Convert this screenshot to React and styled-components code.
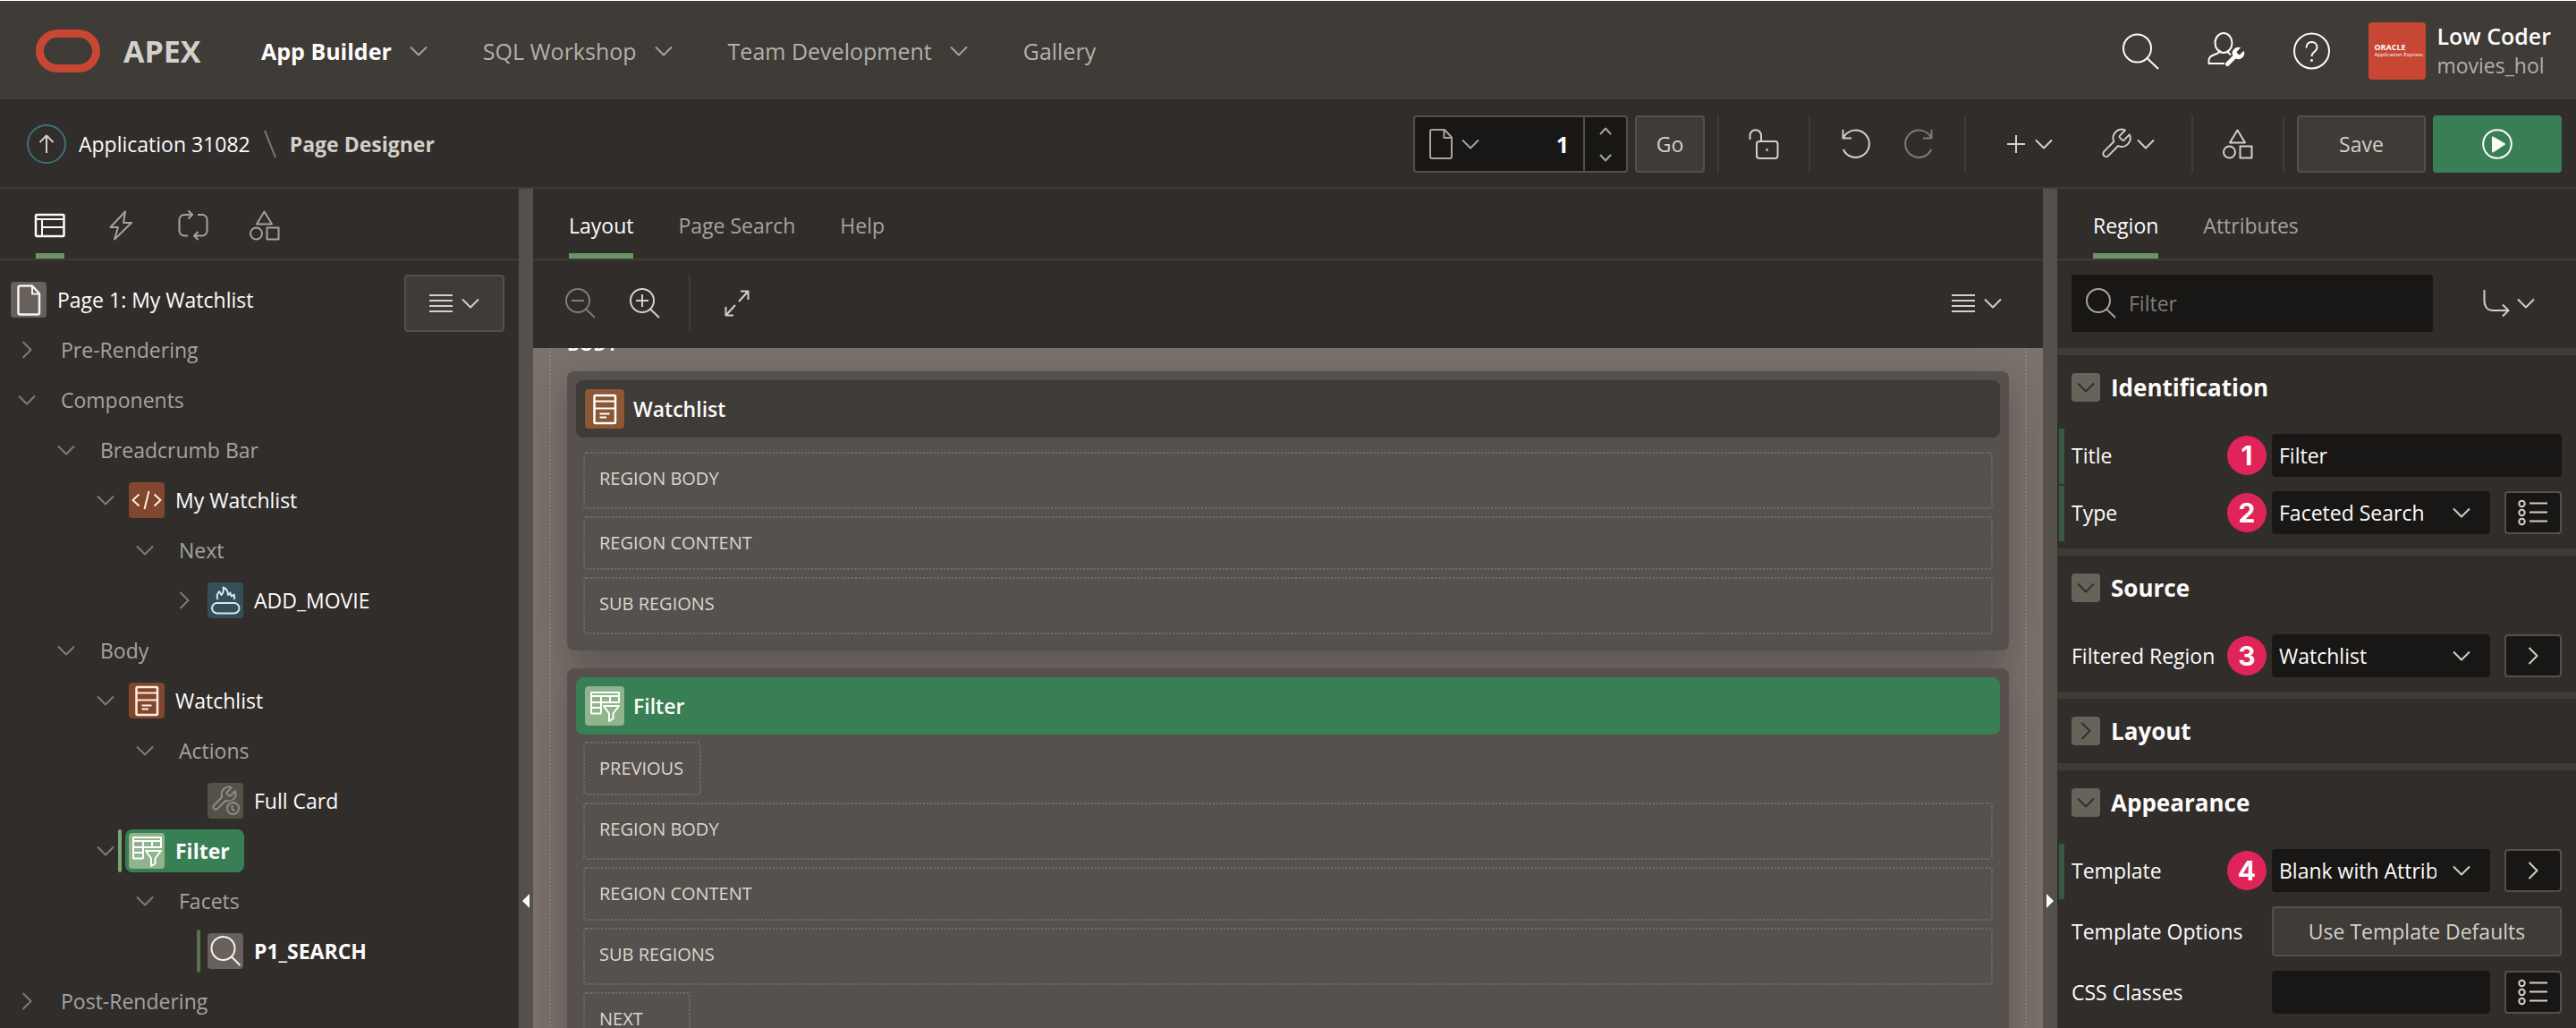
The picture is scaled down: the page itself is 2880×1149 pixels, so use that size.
import React from 'react';
import styled, { createGlobalStyle, css } from 'styled-components';

const c = {
  base: '#312d2a',
  raised: '#3f3b36',
  edge: '#54504a',
  field: '#191715',
  canvas: '#7b726d',
  card: '#56514c',
  green: '#397f55',
  underline: '#6b9464',
  white: '#fdfcfb',
  muted: '#a6a39f',
  soft: '#d3d0cb',
  pink: '#df2459',
};

const Global = createGlobalStyle`
  *, *::before, *::after { box-sizing: border-box; }
  body { margin: 0; background: ${c.base}; color: ${c.white}; font: 23px/32px "Open Sans", "Noto Sans", sans-serif; }
  button, input, select { font: inherit; color: inherit; margin: 0; }
  button { cursor: pointer; }
  a { color: inherit; text-decoration: none; }
  ul { list-style: none; margin: 0; padding: 0; }
`;

/* ---------- icons ---------- */

const WRENCH = 'M14.7 6.3a1 1 0 0 0 0 1.4l1.6 1.6a1 1 0 0 0 1.4 0l3.77-3.77a6 6 0 0 1-7.94 7.94l-6.91 6.91a2.12 2.12 0 0 1-3-3l6.91-6.91a6 6 0 0 1 7.94-7.94l-3.76 3.76z';

const ICONS = {
  down: [20, 12, <path d="M1 1.5l9 9 9-9" />],
  up: [14, 9, <path d="M1 8l6-6.5L13 8" />],
  downSmall: [14, 9, <path d="M1 1l6 6.5L13 1" />],
  right: [12, 20, <path d="M1.5 1l9 9-9 9" />],
  search: [41, 41, <><circle cx="16.5" cy="17" r="15.5" /><path d="M28 28.5L40 40" /></>],
  searchSmall: [34, 34, <><circle cx="14" cy="14" r="13" /><path d="M23.5 24l9.5 9" /></>],
  zoomOut: [34, 34, <><circle cx="14" cy="14" r="13" /><path d="M23.5 24l9.5 9M7 14h14" /></>],
  zoomIn: [34, 34, <><circle cx="14" cy="14" r="13" /><path d="M23.5 24l9.5 9M7 14h14M14 7v14" /></>],
  admin: [42, 42, <><ellipse cx="18" cy="12" rx="9.5" ry="11" /><path d="M19 35H1.5v-3c0-3 1.5-5 4.5-6.2l5-2c2-1 3-2 2.5-4M23 20v2.5l3 3" /><g transform="translate(16.5 14.5) scale(1.12)"><path d={WRENCH} fill="currentColor" stroke="none" /></g></>],
  help: [42, 42, <><circle cx="20.5" cy="21" r="19.5" /><path d="M14.5 17.5c0-4 2.5-6.5 6-6.5s6 2.5 6 6c0 5-6 4.5-6 10" /><circle cx="20.5" cy="31.5" r="1.5" fill="currentColor" stroke="none" /></>],
  arrowUp: [20, 22, <path d="M10 21V2M2.5 9L10 1.5 17.5 9" />],
  doc: [26, 34, <><path d="M3 1h14l8 8.500V31a2 2 0 0 1-2 2H3a2 2 0 0 1-2-2V3a2 2 0 0 1 2-2z" /><path d="M16.5 1.5V10H25" /></>],
  lock: [34, 34, <><path d="M1.5 12V7.5a6.2 6.2 0 0 1 12.500 0v6" /><rect x="9" y="14" width="23.5" height="19" rx="3" /><path d="M20.5 22v3" /></>],
  undo: [32, 34, <path d="M1.5 1v9.500H11M2 10A15.2 15.2 0 1 1 1.8 23" />],
  redo: [32, 34, <path d="M30.5 1v9.500H21M30 10A15.2 15.2 0 1 0 30.2 23" />],
  plus: [22, 22, <path d="M11 1v20M1 11h20" />],
  wrench: [34, 34, <g transform="translate(-2.5 -2.5) scale(1.6)"><path d={WRENCH} strokeWidth="1.2" /></g>],
  shapes: [34, 34, <><path d="M16.5 1.5L25 15.500H8z" /><circle cx="7.5" cy="26" r="6.5" /><rect x="19.5" y="19.5" width="13" height="13" /></>],
  play: [34, 34, <><circle cx="17" cy="17" r="15.8" /><path d="M12 9.5L25 17 12 25.500z" fill="currentColor" /></>],
  layout: [34, 26, <><rect x="1" y="1" width="31.5" height="24" rx="1" strokeWidth="2.5" /><path d="M1 6h31M8 6v19M8 15h24" /></>],
  bolt: [34, 34, <path d="M21 1.5L4.5 19H13L9 32.5 28 14h-9z" />],
  sync: [34, 34, <><path d="M11 28.500H7a5.5 5.5 0 0 1-5.5-5.5V10.5A5.5 5.5 0 0 1 7 5h9M11.5 0.5L16 5l-4.5 4.5" /><path d="M22 5h5a5.5 5.5 0 0 1 5.5 5.500V23a5.5 5.5 0 0 1-5.5 5.500h-9M22.5 24L18 28.5l4.5 4.5" /></>],
  lines: [26, 22, <path d="M0 2h26M0 8h26M0 14h26M0 20h26" />],
  expand: [28, 30, <path d="M16 13L26.5 1.5M18 1.5h8.500V11M12 17L1.5 28.5M10 28.500H1.5V19" />],
  goto: [30, 32, <path d="M1.5 1v12c0 7 4 11 10 11h17M22 17.5l6.5 6.5-6.5 6.5" />],
  bullets: [34, 30, <><circle cx="4.5" cy="5" r="3.2" /><circle cx="4.5" cy="15" r="3.2" /><circle cx="4.5" cy="25" r="3.2" /><path d="M13 4.5h20M13 14.5h20M13 24.5h20" /></>],
  page: [40, 40, <><path d="M10.5 4.500H24l8 8.500v21.5a2 2 0 0 1-2 2H10.5a2 2 0 0 1-2-2v-28a2 2 0 0 1 2-2z" strokeWidth="2.5" /><path d="M24 5v8.500h8" /></>],
  code: [40, 40, <path d="M11.5 13.5l-7 6.500 7 6.500M28.5 13.5l7 6.500-7 6.500M17.5 30l5-20" />],
  cards: [40, 40, <><rect x="8.5" y="5" width="23.5" height="31" rx="1" strokeWidth="2.5" /><path d="M8.5 11.500H32M8.5 19.500H32M14.5 25.5h11M14.5 29.5h7.5" /></>],
  fire: [40, 40, <><rect x="5" y="23" width="30.5" height="11.5" rx="5.7" /><path d="M11.5 19c-1.5-3-.5-6.500 1.500-9l2.500 4c2-2 3-4.500 2-8.500 4 1.500 5.500 4.500 5.500 8.500l2.500-2.500c0 2 .5 3 1.500 4l2.500-2c1 2 1 3.500 0 5.500" /></>],
  wrenchClock: [40, 40, <><g transform="translate(2.5 2) scale(1.32)"><path d={WRENCH} strokeWidth="1.5" /></g><circle cx="28.5" cy="28.5" r="9" fill="#54504a" stroke="none" /><circle cx="28.5" cy="28.5" r="6.5" /><path d="M27.5 25v4l2.5 2.5" /></>],
  facet: [40, 40, <><path d="M16 28.500H5V5h31v11H5M5 9h31M5 22h11M16 9v19.5M26 9v7" /><path d="M19 20h17l-6.5 8.5v6l-4.5 2.5v-8.500z" /></>],
  find: [40, 40, <><circle cx="17.5" cy="17" r="13" /><path d="M27 26.5l9.5 9.5" /></>],
  slash: [14, 32, <path d="M1 1l12 30" />],
  collapseLeft: [8, 16, <path d="M8 0v16L0 8z" fill="currentColor" stroke="none" />],
  collapseRight: [8, 16, <path d="M0 0v16l8-8z" fill="currentColor" stroke="none" />],
};

const Svg = styled.svg`
  display: block;
  flex: none;
  overflow: visible;
`;

function Icon({ name }) {
  const [w, h, body] = ICONS[name];
  return (
    <Svg width={w} height={h} viewBox={`0 0 ${w} ${h}`} fill="none" stroke="currentColor" strokeWidth="2" strokeLinejoin="round" aria-hidden="true">
      {body}
    </Svg>
  );
}

/* ---------- frame ---------- */

const Page = styled.div`
  height: 100vh;
  display: flex;
  flex-direction: column;
  overflow: hidden;
  border-top: 1px solid #fff;
`;

const Header = styled.header`
  flex: none;
  height: 110px;
  padding: 2px 28px 0 40px;
  display: flex;
  align-items: center;
  background: ${c.raised};
`;

const LogoMark = styled.span`
  flex: none;
  width: 72px;
  height: 48px;
  border: 9px solid #c74634;
  border-radius: 24px;
`;

const LogoText = styled.span`
  width: 92px;
  margin-left: 26px;
  font-size: 34px;
  line-height: 48px;
  font-weight: 700;
  color: ${c.soft};
`;

const Nav = styled.nav`
  flex: 1;
  margin-left: 62px;
  display: flex;
  gap: 62px;
`;

const NavLink = styled.a`
  display: flex;
  align-items: center;
  gap: 20px;
  font-size: 25px;
  font-weight: ${(p) => (p.$current ? 700 : 400)};
  color: ${(p) => (p.$current ? c.white : '#b3b0ac')};
  svg { color: ${c.muted}; }
`;

const HeaderTools = styled.div`
  display: flex;
  gap: 54px;
  margin-right: 42px;
`;

const BareButton = styled.button`
  display: flex;
  align-items: center;
  justify-content: center;
  gap: ${(p) => p.$gap || 10}px;
  padding: 0;
  border: 0;
  background: none;
  color: ${(p) => (p.$dim ? '#7f7b76' : c.soft)};
`;

const HeaderButton = styled(BareButton)`
  width: 42px;
  height: 42px;
  color: ${c.white};
`;

const Avatar = styled.span`
  width: 64px;
  height: 64px;
  padding-left: 6px;
  display: flex;
  flex-direction: column;
  justify-content: center;
  border-radius: 4px;
  background: #c74634;
  font-size: 6px;
  line-height: 8px;
  white-space: nowrap;
  strong { font-size: 9px; }
`;

const User = styled.div`
  display: flex;
  align-items: center;
  gap: 12px;
`;

const UserName = styled.div`
  font-size: 25px;
  line-height: 33px;
  font-weight: 600;
  small { display: block; font-size: 23px; font-weight: 400; color: #b3b0ac; }
`;

const Toolbar = styled.div`
  flex: none;
  height: 100px;
  padding: 2px 16px 0 30px;
  display: flex;
  align-items: center;
  border-bottom: 2px solid ${c.raised};
`;

const Crumbs = styled.nav`
  flex: 1;
  display: flex;
  align-items: center;
  strong { font-weight: 700; color: ${c.soft}; }
  > svg { margin: 0 15px; color: #7f7b76; }
`;

const UpLink = styled.a`
  width: 44px;
  height: 44px;
  margin-right: 14px;
  display: grid;
  place-items: center;
  border: 2px solid #3e6f7b;
  border-radius: 50%;
  color: ${c.soft};
`;

const PagePicker = styled.div`
  width: 240px;
  height: 64px;
  margin-right: 8px;
  display: flex;
  border: 2px solid ${c.edge};
  border-radius: 4px;
  background: ${c.field};
`;

const PickerButton = styled(BareButton)`
  width: 88px;
  color: ${c.muted};
`;

const PickerInput = styled.input`
  width: 100px;
  padding: 0 16px;
  border: 0;
  background: none;
  text-align: right;
  font-size: 25px;
  font-weight: 700;
`;

const Stepper = styled.div`
  flex: 1;
  display: flex;
  flex-direction: column;
  border-left: 2px solid ${c.edge};
`;

const StepButton = styled(BareButton)`
  flex: 1;
  color: ${c.muted};
`;

const Button = styled.button`
  width: ${(p) => (p.$wide ? '144px' : '78px')};
  height: 64px;
  display: grid;
  place-items: center;
  padding: 0;
  border: 2px solid ${(p) => (p.$hot ? c.green : c.edge)};
  border-radius: 4px;
  background: ${(p) => (p.$hot ? c.green : c.raised)};
  color: ${(p) => (p.$hot ? c.white : c.soft)};
`;

const MenuButton = styled(Button)`
  width: 112px;
  display: flex;
  align-items: center;
  justify-content: center;
  gap: 10px;
`;

const Group = styled.div`
  height: 64px;
  margin-left: ${(p) => (p.$first ? 14 : 0)}px;
  padding: 0 16px;
  display: flex;
  border-left: 2px solid ${c.raised};
`;

const ToolButton = styled(BareButton)`
  width: ${(p) => p.$w}px;
`;

const Actions = styled.div`
  padding-left: 14px;
  display: flex;
  gap: 8px;
  border-left: 2px solid ${c.raised};
`;

const Columns = styled.main`
  flex: 1;
  min-height: 0;
  display: grid;
  grid-template-columns: 580px 16px minmax(0, 1fr) 16px 580px;
`;

const Panel = styled.section`
  min-height: 0;
  overflow: hidden;
  display: flex;
  flex-direction: column;
`;

const Splitter = styled.div`
  display: grid;
  grid-template-rows: 6fr 1fr;
  justify-items: center;
  align-items: end;
  background: ${c.edge};
`;

const Tabs = styled.div`
  flex: none;
  height: 80px;
  padding: 0 40px;
  display: flex;
  gap: ${(p) => p.$gap || 50}px;
  border-bottom: 2px solid ${c.raised};
`;

const Tab = styled.button`
  height: 78px;
  padding: 10px 0 0;
  display: flex;
  align-items: center;
  justify-content: center;
  border: 0;
  border-bottom: 6px solid ${(p) => (p.$on ? c.underline : 'transparent')};
  background: none;
  color: ${(p) => (p.$on ? c.white : c.muted)};
`;

const IconTab = styled(Tab)`
  width: 32px;
`;

/* ---------- tree ---------- */

const Tree = styled.ul`
  padding-top: 16px;
`;

const TreeRow = styled.li`
  height: 56px;
  padding-left: ${(p) => 8 + p.$level * 44}px;
  padding-right: 16px;
  display: flex;
  align-items: center;
`;

const Twisty = styled.button`
  width: 44px;
  height: 44px;
  display: grid;
  place-items: center;
  padding: 0;
  border: 0;
  background: none;
  color: #7f7b76;
`;

const Marker = styled.span`
  width: 4px;
  height: 48px;
  margin: 0 4px 0 -8px;
  border-radius: 2px;
  background: ${(p) => (p.$bright ? '#7ba56f' : '#58734f')};
`;

const Node = styled.span`
  height: 48px;
  padding: ${(p) => (p.$plain ? '0 16px' : '0 16px 0 4px')};
  display: flex;
  align-items: center;
  gap: 12px;
  border-radius: 8px;
  color: ${(p) => (p.$plain ? c.muted : c.white)};
  font-weight: ${(p) => (p.$bold ? 700 : p.$plain ? 400 : 500)};
  ${(p) => p.$selected && css`background: ${c.green};`}
`;

const RootRow = styled(TreeRow)`
  justify-content: space-between;
  align-items: flex-start;
  ${Node} { height: 56px; font-weight: 400; }
`;

const tones = {
  rust: ['#80462e', '#fdeedd'],
  clay: ['#8b5735', '#ffffff'],
  teal: ['#364f57', '#d3e9f2'],
  dull: ['#54504a', '#8f8b86'],
  lime: ['#90b48b', '#ffffff'],
  stone: ['#67605b', '#f5f3f0'],
};

const Tile = styled.span`
  width: ${(p) => (p.$large ? 44 : 40)}px;
  height: ${(p) => (p.$large ? 44 : 40)}px;
  display: grid;
  place-items: center;
  border-radius: 4px;
  background: ${(p) => tones[p.$tone][0]};
  color: ${(p) => tones[p.$tone][1]};
`;

const TREE = [
  { level: 0, twist: 'right', text: 'Pre-Rendering' },
  { level: 0, twist: 'down', text: 'Components' },
  { level: 1, twist: 'down', text: 'Breadcrumb Bar' },
  { level: 2, twist: 'down', icon: 'code', tone: 'rust', text: 'My Watchlist' },
  { level: 3, twist: 'down', text: 'Next' },
  { level: 4, twist: 'right', icon: 'fire', tone: 'teal', text: 'ADD_MOVIE' },
  { level: 1, twist: 'down', text: 'Body' },
  { level: 2, twist: 'down', icon: 'cards', tone: 'rust', text: 'Watchlist' },
  { level: 3, twist: 'down', text: 'Actions' },
  { level: 4, icon: 'wrenchClock', tone: 'dull', text: 'Full Card' },
  { level: 2, twist: 'down', icon: 'facet', tone: 'lime', text: 'Filter', bold: true, selected: true, marker: true },
  { level: 3, twist: 'down', text: 'Facets' },
  { level: 4, icon: 'find', tone: 'stone', text: 'P1_SEARCH', bold: true, marker: true },
  { level: 0, twist: 'right', text: 'Post-Rendering' },
];

/* ---------- layout canvas ---------- */

const CanvasBar = styled.div`
  flex: none;
  height: 98px;
  padding: 16px 46px 18px 36px;
  display: flex;
  justify-content: space-between;
`;

const BarGroup = styled.div`
  display: flex;
  align-items: center;
  gap: 38px;
`;

const BarRule = styled.span`
  width: 2px;
  height: 64px;
  margin-left: -6px;
  background: ${c.raised};
`;

const Canvas = styled.div`
  flex: 1;
  min-height: 0;
  overflow: hidden;
  padding: 0 18px;
  background: ${c.canvas};
`;

const Position = styled.div`
  padding: 0 18px;
  border: 2px dotted #8b847e;
  border-width: 0 2px;
`;

const PositionLabel = styled.div`
  margin: -16px 0 18px;
  font-size: 20px;
  line-height: 24px;
  font-weight: 700;
`;

const Region = styled.article`
  margin-bottom: 20px;
  padding: 10px 10px 18px;
  border-radius: 8px;
  background: ${c.card};
  box-shadow: 0 16px 48px rgba(25, 23, 21, 0.32);
`;

const RegionHead = styled.h3`
  height: 64px;
  margin: 0;
  padding: 0 10px;
  display: flex;
  align-items: center;
  gap: 10px;
  border-radius: 8px;
  background: ${(p) => (p.$selected ? c.green : c.raised)};
  font-size: 23px;
  font-weight: 600;
`;

const Slots = styled.div`
  padding: ${(p) => (p.$loose ? '16px' : '8px')} 8px 0;
  display: flex;
  flex-direction: column;
  align-items: flex-start;
  gap: 8px;
`;

const Slot = styled.div`
  width: ${(p) => (p.$small ? 'auto' : '100%')};
  min-width: 120px;
  height: ${(p) => (p.$low ? 60 : 64)}px;
  padding: 14px 18px 14px 16px;
  border: 2px dotted #716c67;
  border-radius: 4px;
  font-size: 20px;
  line-height: 28px;
  color: #dad7d3;
`;

/* ---------- properties ---------- */

const PropertyBar = styled.div`
  flex: none;
  height: 98px;
  padding: 16px 46px 18px 16px;
  display: flex;
  justify-content: space-between;
`;

const SearchBox = styled.label`
  width: 404px;
  height: 64px;
  padding: 0 16px;
  display: flex;
  align-items: center;
  gap: 14px;
  border-radius: 4px;
  background: ${c.field};
  color: ${c.muted};
  input {
    flex: 1;
    min-width: 0;
    padding: 0;
    border: 0;
    background: none;
  }
  input::placeholder { color: #7f7b76; opacity: 1; }
`;

const Section = styled.section`
  border-top: 8px solid ${c.raised};
`;

const SectionHead = styled.h2`
  height: 72px;
  margin: 0;
  padding: 0 16px;
  display: flex;
  align-items: center;
  gap: 12px;
  font-size: 26px;
  font-weight: 700;
  button {
    width: 32px;
    height: 32px;
    display: grid;
    place-items: center;
    padding: 0;
    border: 0;
    border-radius: 4px;
    background: #67635b;
    color: ${c.base};
  }
`;

const SectionBody = styled.div`
  padding: 8px 0;
`;

const Row = styled.div`
  height: ${(p) => (p.$tall ? 72 : 64)}px;
  display: grid;
  grid-template-columns: 6px 232px minmax(0, 1fr);
  align-items: center;
  padding: 0 16px 0 2px;
`;

const Changed = styled.span`
  align-self: stretch;
  margin-top: 2px;
  background: ${(p) => (p.$on ? '#37593f' : 'transparent')};
`;

const LabelCell = styled.div`
  padding: 0 6px 0 8px;
  display: flex;
  align-items: center;
  justify-content: space-between;
  white-space: nowrap;
`;

const Badge = styled.span`
  width: 44px;
  height: 44px;
  display: grid;
  place-items: center;
  border-radius: 50%;
  background: ${c.pink};
  font: 700 30px/44px "Inter", sans-serif;
`;

const Control = styled.div`
  display: flex;
  gap: 16px;
`;

const field = css`
  flex: 1;
  width: 100%;
  min-width: 0;
  height: 48px;
  padding: 0 8px;
  border: 0;
  border-radius: 4px;
  background: ${c.field};
`;

const TextField = styled.input`${field}`;

const SelectWrap = styled.div`
  flex: 1;
  min-width: 0;
  display: grid;
  align-items: center;
  > * { grid-area: 1 / 1; }
  > svg { justify-self: end; margin-right: 22px; color: ${c.soft}; pointer-events: none; }
`;

const Select = styled.select`
  ${field}
  padding-right: 60px;
  appearance: none;
  text-overflow: clip;
`;

const SideButton = styled.button`
  width: 64px;
  height: 48px;
  display: grid;
  place-items: center;
  padding: 0;
  border: 2px solid ${c.edge};
  border-radius: 4px;
  background: ${c.field};
  color: ${c.soft};
`;

const OptionsButton = styled(Button)`
  flex: 1;
  height: 56px;
`;

function Property({ id, label, badge, changed, tall, children }) {
  return (
    <Row $tall={tall}>
      <Changed $on={changed} />
      <LabelCell>
        <label htmlFor={id}>{label}</label>
        {badge && <Badge>{badge}</Badge>}
      </LabelCell>
      <Control>{children}</Control>
    </Row>
  );
}

function Picker({ id, value }) {
  return (
    <SelectWrap>
      <Select id={id} defaultValue={value}>
        <option>{value}</option>
      </Select>
      <Icon name="down" />
    </SelectWrap>
  );
}

function PropertySection({ title, closed, children }) {
  return (
    <Section>
      <SectionHead>
        <button type="button" aria-label={`Toggle ${title}`}>
          <Icon name={closed ? 'right' : 'down'} />
        </button>
        {title}
      </SectionHead>
      {children && <SectionBody>{children}</SectionBody>}
    </Section>
  );
}

export default function App() {
  return (
    <Page>
      <Global />
      <Header>
        <LogoMark />
        <LogoText>APEX</LogoText>
        <Nav>
          <NavLink href="#builder" $current>App Builder<Icon name="down" /></NavLink>
          <NavLink href="#sql">SQL Workshop<Icon name="down" /></NavLink>
          <NavLink href="#team">Team Development<Icon name="down" /></NavLink>
          <NavLink href="#gallery">Gallery</NavLink>
        </Nav>
        <HeaderTools>
          <HeaderButton aria-label="Search"><Icon name="search" /></HeaderButton>
          <HeaderButton aria-label="Administration"><Icon name="admin" /></HeaderButton>
          <HeaderButton aria-label="Help"><Icon name="help" /></HeaderButton>
        </HeaderTools>
        <User>
          <Avatar><strong>ORACLE</strong>Application Express</Avatar>
          <UserName>Low Coder<small>movies_hol</small></UserName>
        </User>
      </Header>

      <Toolbar>
        <Crumbs>
          <UpLink href="#up" aria-label="Up"><Icon name="arrowUp" /></UpLink>
          <a href="#app">Application 31082</a>
          <Icon name="slash" />
          <strong>Page Designer</strong>
        </Crumbs>
        <PagePicker>
          <PickerButton aria-label="Page finder"><Icon name="doc" /><Icon name="down" /></PickerButton>
          <PickerInput defaultValue="1" aria-label="Page number" />
          <Stepper>
            <StepButton aria-label="Next page"><Icon name="up" /></StepButton>
            <StepButton aria-label="Previous page"><Icon name="downSmall" /></StepButton>
          </Stepper>
        </PagePicker>
        <Button>Go</Button>
        <Group $first>
          <ToolButton $w={68} aria-label="Lock page"><Icon name="lock" /></ToolButton>
        </Group>
        <Group>
          <ToolButton $w={70} aria-label="Undo"><Icon name="undo" /></ToolButton>
          <ToolButton $w={70} $dim aria-label="Redo"><Icon name="redo" /></ToolButton>
        </Group>
        <Group>
          <ToolButton $w={110} aria-label="Create"><Icon name="plus" /><Icon name="down" /></ToolButton>
          <ToolButton $w={110} $gap={6} aria-label="Utilities"><Icon name="wrench" /><Icon name="down" /></ToolButton>
        </Group>
        <Group>
          <ToolButton $w={68} aria-label="Shared components"><Icon name="shapes" /></ToolButton>
        </Group>
        <Actions>
          <Button $wide>Save</Button>
          <Button $wide $hot aria-label="Save and run"><Icon name="play" /></Button>
        </Actions>
      </Toolbar>

      <Columns>
        <Panel>
          <Tabs $gap={48}>
            <IconTab $on aria-label="Rendering"><Icon name="layout" /></IconTab>
            <IconTab aria-label="Dynamic actions"><Icon name="bolt" /></IconTab>
            <IconTab aria-label="Processing"><Icon name="sync" /></IconTab>
            <IconTab aria-label="Shared components"><Icon name="shapes" /></IconTab>
          </Tabs>
          <Tree>
            <RootRow $level={0}>
              <Node><Tile $tone="stone"><Icon name="page" /></Tile>Page 1: My Watchlist</Node>
              <MenuButton aria-label="Tree options"><Icon name="lines" /><Icon name="down" /></MenuButton>
            </RootRow>
            {TREE.map((n) => (
              <TreeRow key={n.level + n.text} $level={n.level}>
                <Twisty disabled={!n.twist} aria-label={n.text}>{n.twist && <Icon name={n.twist} />}</Twisty>
                {n.marker && <Marker $bright={n.selected} />}
                <Node $plain={!n.icon} $bold={n.bold} $selected={n.selected}>
                  {n.icon && <Tile $tone={n.tone}><Icon name={n.icon} /></Tile>}
                  {n.text}
                </Node>
              </TreeRow>
            ))}
          </Tree>
        </Panel>

        <Splitter><Icon name="collapseLeft" /></Splitter>

        <Panel>
          <Tabs>
            <Tab $on>Layout</Tab>
            <Tab>Page Search</Tab>
            <Tab>Help</Tab>
          </Tabs>
          <CanvasBar>
            <BarGroup>
              <BareButton $dim aria-label="Zoom out"><Icon name="zoomOut" /></BareButton>
              <BareButton aria-label="Zoom in"><Icon name="zoomIn" /></BareButton>
              <BarRule />
              <BareButton aria-label="Expand"><Icon name="expand" /></BareButton>
            </BarGroup>
            <BareButton aria-label="Layout options"><Icon name="lines" /><Icon name="down" /></BareButton>
          </CanvasBar>
          <Canvas>
            <Position>
              <PositionLabel>BODY</PositionLabel>
              <Region>
                <RegionHead><Tile $large $tone="clay"><Icon name="cards" /></Tile>Watchlist</RegionHead>
                <Slots $loose>
                  <Slot>REGION BODY</Slot>
                  <Slot $low>REGION CONTENT</Slot>
                  <Slot>SUB REGIONS</Slot>
                </Slots>
              </Region>
              <Region>
                <RegionHead $selected><Tile $large $tone="lime"><Icon name="facet" /></Tile>Filter</RegionHead>
                <Slots>
                  <Slot $small $low>PREVIOUS</Slot>
                  <Slot>REGION BODY</Slot>
                  <Slot $low>REGION CONTENT</Slot>
                  <Slot>SUB REGIONS</Slot>
                  <Slot $small $low>NEXT</Slot>
                </Slots>
              </Region>
            </Position>
          </Canvas>
        </Panel>

        <Splitter><Icon name="collapseRight" /></Splitter>

        <Panel>
          <Tabs>
            <Tab $on>Region</Tab>
            <Tab>Attributes</Tab>
          </Tabs>
          <PropertyBar>
            <SearchBox>
              <Icon name="searchSmall" />
              <input placeholder="Filter" aria-label="Filter properties" />
            </SearchBox>
            <BareButton $gap={8} aria-label="Go to group"><Icon name="goto" /><Icon name="down" /></BareButton>
          </PropertyBar>
          <PropertySection title="Identification">
            <Property id="title" label="Title" badge="1" changed>
              <TextField id="title" defaultValue="Filter" />
            </Property>
            <Property id="type" label="Type" badge="2" changed>
              <Picker id="type" value="Faceted Search" />
              <SideButton aria-label="Pick type"><Icon name="bullets" /></SideButton>
            </Property>
          </PropertySection>
          <PropertySection title="Source">
            <Property id="region" label="Filtered Region" badge="3">
              <Picker id="region" value="Watchlist" />
              <SideButton aria-label="Go to region"><Icon name="right" /></SideButton>
            </Property>
          </PropertySection>
          <PropertySection title="Layout" closed />
          <PropertySection title="Appearance">
            <Property id="template" label="Template" badge="4" changed>
              <Picker id="template" value="Blank with Attributes" />
              <SideButton aria-label="Go to template"><Icon name="right" /></SideButton>
            </Property>
            <Property id="options" label="Template Options" tall>
              <OptionsButton id="options">Use Template Defaults</OptionsButton>
            </Property>
            <Property id="css" label="CSS Classes">
              <TextField id="css" />
              <SideButton aria-label="Pick classes"><Icon name="bullets" /></SideButton>
            </Property>
          </PropertySection>
        </Panel>
      </Columns>
    </Page>
  );
}
